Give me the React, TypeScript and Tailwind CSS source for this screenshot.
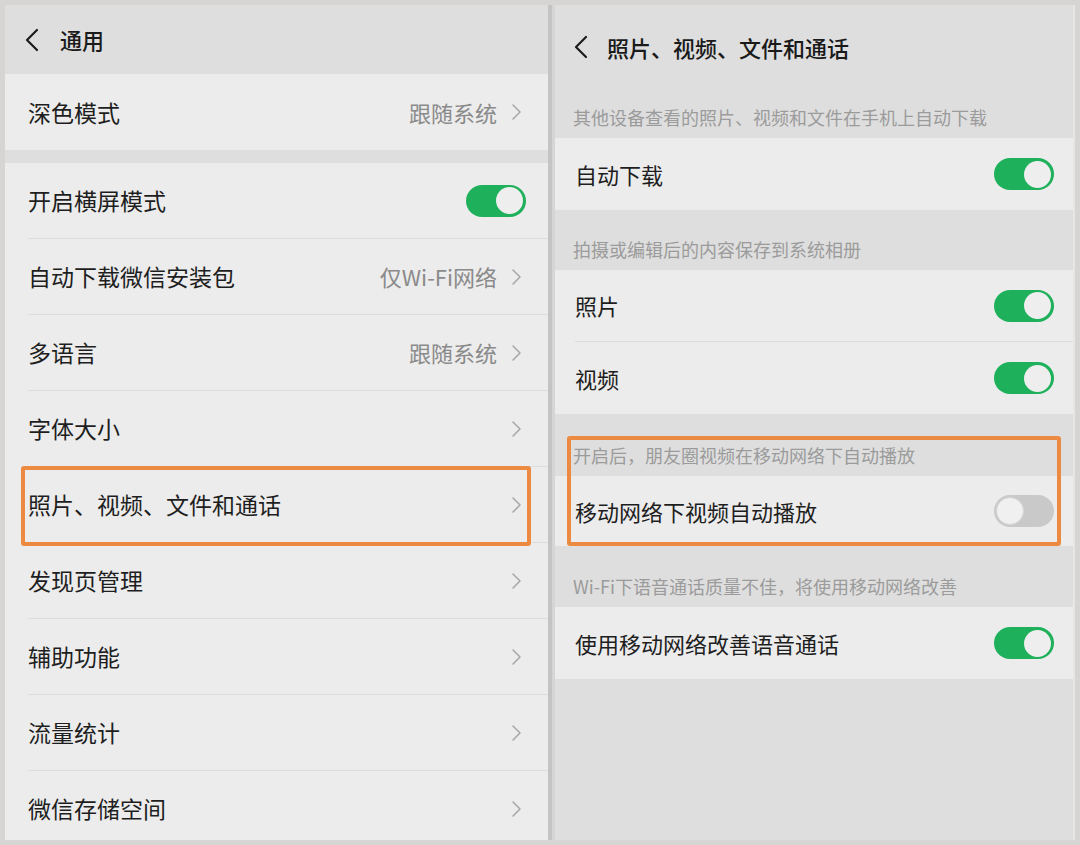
import React from "react";

function Chevron() {
  return (
    <svg width="11" height="18" viewBox="0 0 11 18" className="shrink-0">
      <polyline points="2,2 9,9 2,16" fill="none" stroke="#a9a9a9" strokeWidth="1.6" strokeLinecap="round" strokeLinejoin="round" />
    </svg>
  );
}

function Back() {
  return (
    <svg width="16" height="24" viewBox="0 0 16 24" className="shrink-0">
      <polyline points="13,2 3,12 13,22" fill="none" stroke="#1c1c1c" strokeWidth="2.2" strokeLinecap="round" strokeLinejoin="round" />
    </svg>
  );
}

function Toggle({ on }: { on: boolean }) {
  if (on) {
    return (
      <div className="w-[60px] h-[32px] rounded-full bg-[#1fb05c] flex items-center justify-end p-[3px] shrink-0">
        <div className="w-[27px] h-[27px] rounded-full bg-[#eeeeee]" />
      </div>
    );
  }
  return (
    <div className="w-[60px] h-[32px] rounded-full bg-[#c9c9c9] flex items-center justify-start p-[2px] shrink-0">
      <div className="w-[28px] h-[28px] rounded-full bg-[#f0f0f0] border border-[#d6d6d6]" />
    </div>
  );
}

function NavRow({ label, value, divider = true }: { label: string; value?: string; divider?: boolean }) {
  return (
    <div className="h-[76px] shrink-0 bg-[#ececec] pl-[23px] flex flex-col">
      <div className="flex-1 flex items-center pr-[26px]">
        <span className="text-[23px] text-[#1e1e1e] flex-1">{label}</span>
        {value && <span className="text-[22px] text-[#8a8a8a] mr-[14px]">{value}</span>}
        <Chevron />
      </div>
      {divider && <div className="h-px bg-[#dcdcdc]" />}
    </div>
  );
}

function ToggleRow({ label, on, h = "h-[72px]", divider = false }: { label: string; on: boolean; h?: string; divider?: boolean }) {
  return (
    <div className={`${h} shrink-0 bg-[#ececec] pl-[20px] flex flex-col`}>
      <div className="flex-1 flex items-center pr-[19px]">
        <span className="text-[22px] text-[#1e1e1e] flex-1">{label}</span>
        <Toggle on={on} />
      </div>
      {divider && <div className="h-px bg-[#dcdcdc]" />}
    </div>
  );
}

function Caption({ text, h = "h-[60px]" }: { text: string; h?: string }) {
  return (
    <div className={`${h} shrink-0 flex items-end pl-[18px] pb-[8px]`}>
      <span className="text-[18px] text-[#9b9b9b] leading-[26px]">{text}</span>
    </div>
  );
}

export default function App() {
  return (
    <div className="w-[1080px] h-[845px] bg-[#d7d4d4] flex p-[5px] gap-[3px] font-['Noto_Sans_CJK_SC',sans-serif]">
      {/* 通用 */}
      <div className="relative w-[547px] h-[835px] bg-[#dedede] border-r-4 border-[#c4c4c4] flex flex-col overflow-hidden">
        <div className="h-[69px] shrink-0 flex items-center pl-[19px] gap-[20px]">
          <Back />
          <span className="text-[22px] font-medium text-[#1a1a1a]">通用</span>
        </div>
        <NavRow label="深色模式" value="跟随系统" divider={false} />
        <div className="h-[13px] shrink-0" />
        <div className="h-[76px] shrink-0 bg-[#ececec] pl-[23px] flex flex-col">
          <div className="flex-1 flex items-center pr-[22px]">
            <span className="text-[23px] text-[#1e1e1e] flex-1">开启横屏模式</span>
            <Toggle on />
          </div>
          <div className="h-px bg-[#dcdcdc]" />
        </div>
        <NavRow label="自动下载微信安装包" value="仅Wi-Fi网络" />
        <NavRow label="多语言" value="跟随系统" />
        <NavRow label="字体大小" />
        <NavRow label="照片、视频、文件和通话" />
        <NavRow label="发现页管理" />
        <NavRow label="辅助功能" />
        <NavRow label="流量统计" />
        <NavRow label="微信存储空间" />
        <div className="absolute left-[16px] top-[461px] w-[510px] h-[80px] border-4 border-[#ec8a42] rounded-[3px]" />
      </div>

      {/* 照片、视频、文件和通话 */}
      <div className="relative w-[520px] h-[835px] bg-[#dedede] border-r-2 border-[#e6e6e6] flex flex-col overflow-hidden">
        <div className="h-[84px] shrink-0 flex items-center pl-[18px] gap-[18px]">
          <Back />
          <span className="text-[22px] font-medium text-[#1a1a1a]">照片、视频、文件和通话</span>
        </div>
        <Caption text="其他设备查看的照片、视频和文件在手机上自动下载" h="h-[49px]" />
        <ToggleRow label="自动下载" on />
        <Caption text="拍摄或编辑后的内容保存到系统相册" />
        <ToggleRow label="照片" on divider />
        <ToggleRow label="视频" on />
        <Caption text="开启后，朋友圈视频在移动网络下自动播放" h="h-[62px]" />
        <ToggleRow label="移动网络下视频自动播放" on={false} h="h-[70px]" />
        <Caption text="Wi-Fi下语音通话质量不佳，将使用移动网络改善" h="h-[61px]" />
        <ToggleRow label="使用移动网络改善语音通话" on />
        <div className="absolute left-[12px] top-[431px] w-[494px] h-[110px] border-4 border-[#ec8a42] rounded-[3px]" />
      </div>
    </div>
  );
}
